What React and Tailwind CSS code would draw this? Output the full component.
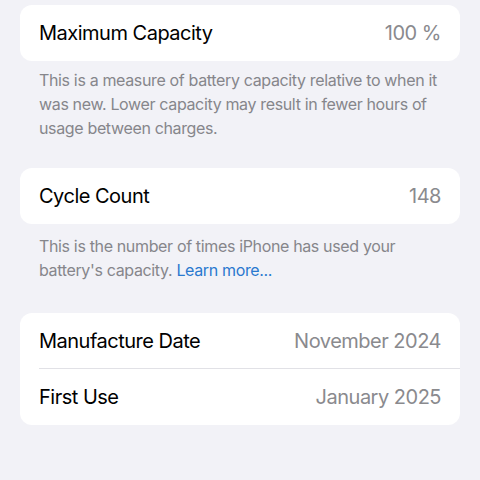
export default function App() {
  return (
    <main className="min-h-[480px] w-[480px] bg-[#f2f2f7] px-5 pt-[5px] font-['Inter',sans-serif]">
      <section className="flex h-[56px] items-center justify-between rounded-[12px] bg-white pl-[19px] pr-[19px]">
        <span className="text-[20px] tracking-[-0.5px] text-black">Maximum Capacity</span>
        <span className="text-[20px] tracking-[-0.5px] text-[#8a8a8e]">100 %</span>
      </section>
      <p className="mt-[7px] px-[19px] text-[16px] leading-[24px] tracking-[-0.35px] text-[#86868b]">
        This is a measure of battery capacity relative to when it was new. Lower capacity may result in fewer hours of usage between charges.
      </p>

      <section className="mt-[28px] flex h-[56px] items-center justify-between rounded-[12px] bg-white px-[19px]">
        <span className="text-[20px] tracking-[-0.5px] text-black">Cycle Count</span>
        <span className="text-[20px] tracking-[-0.5px] text-[#8a8a8e]">148</span>
      </section>
      <p className="mt-[10px] px-[19px] text-[16px] leading-[24px] tracking-[-0.35px] text-[#86868b]">
        This is the number of times iPhone has used your battery's capacity. <a className="text-[#2a79cf]">Learn more...</a>
      </p>

      <section className="mt-[31px] rounded-[12px] bg-white pl-[19px]">
        <div className="flex h-[55px] items-center justify-between pr-[19px]">
          <span className="text-[20px] tracking-[-0.5px] text-black">Manufacture Date</span>
          <span className="text-[20px] tracking-[-0.5px] text-[#8a8a8e]">November 2024</span>
        </div>
        <div className="h-px bg-[#e1e1e6]" />
        <div className="flex h-[56px] items-center justify-between pr-[19px]">
          <span className="text-[20px] tracking-[-0.5px] text-black">First Use</span>
          <span className="text-[20px] tracking-[-0.5px] text-[#8a8a8e]">January 2025</span>
        </div>
      </section>
    </main>
  );
}
